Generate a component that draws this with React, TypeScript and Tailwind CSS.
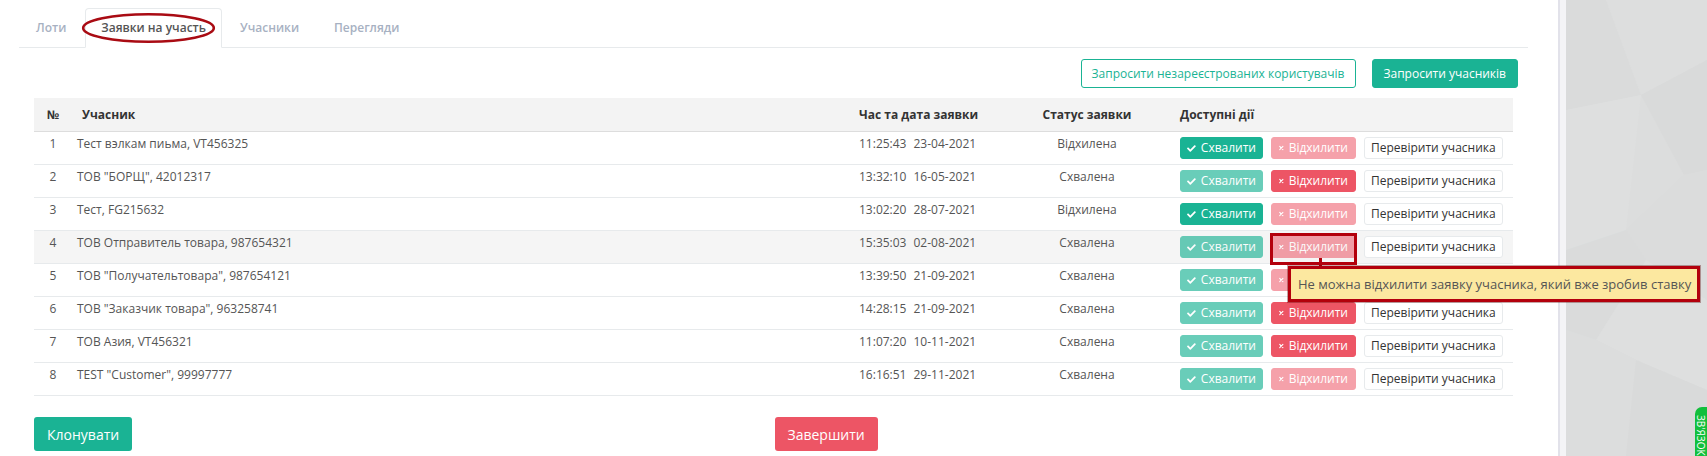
import React from "react";

type Row = {
  n: number;
  name: string;
  time: string;
  date: string;
  status: string;
  approve: boolean;
  reject: boolean;
  highlight?: boolean;
  hover?: boolean;
};

const rows: Row[] = [
  { n: 1, name: "Тест вэлкам пиьма, VT456325", time: "11:25:43", date: "23-04-2021", status: "Відхилена", approve: true, reject: false },
  { n: 2, name: 'ТОВ "БОРЩ", 42012317', time: "13:32:10", date: "16-05-2021", status: "Схвалена", approve: false, reject: true },
  { n: 3, name: "Тест, FG215632", time: "13:02:20", date: "28-07-2021", status: "Відхилена", approve: true, reject: false },
  { n: 4, name: "ТОВ Отправитель товара, 987654321", time: "15:35:03", date: "02-08-2021", status: "Схвалена", approve: false, reject: false, highlight: true, hover: true },
  { n: 5, name: 'ТОВ "Получательтовара", 987654121', time: "13:39:50", date: "21-09-2021", status: "Схвалена", approve: false, reject: false },
  { n: 6, name: 'ТОВ "Заказчик товара", 963258741', time: "14:28:15", date: "21-09-2021", status: "Схвалена", approve: false, reject: true },
  { n: 7, name: "ТОВ Азия, VT456321", time: "11:07:20", date: "10-11-2021", status: "Схвалена", approve: false, reject: true },
  { n: 8, name: 'TEST "Customer", 99997777', time: "16:16:51", date: "29-11-2021", status: "Схвалена", approve: false, reject: false },
];

const CheckIcon = () => (
  <svg viewBox="0 0 512 512" className="h-[9px] w-[10px] fill-white">
    <path d="M173.9 439.4L7.5 273c-10-10-10-26.2 0-36.2l36.2-36.2c10-10 26.2-10 36.2 0L192 312.7 432.1 72.6c10-10 26.2-10 36.2 0l36.2 36.2c10 10 10 26.2 0 36.2L210.1 439.4c-10 10-26.2 10-36.2 0z" />
  </svg>
);

const TimesIcon = () => (
  <svg viewBox="0 0 10 10" className="h-[8px] w-[8px]">
    <path d="M1.6 1.6 L8.4 8.4 M8.4 1.6 L1.6 8.4" stroke="white" strokeWidth="2.4" strokeLinecap="round" />
  </svg>
);

function ApproveBtn({ active }: { active: boolean }) {
  return (
    <span
      className={
        "inline-flex h-[22px] w-[83px] items-center gap-[5px] rounded-[3px] border border-[#1ab394] bg-[#1ab394] px-[6px] text-[12px] leading-[18px] text-white " +
        (active ? "" : "opacity-65")
      }
    >
      <CheckIcon />
      Схвалити
    </span>
  );
}

function RejectBtn({ active, highlight }: { active: boolean; highlight?: boolean }) {
  return (
    <span className="relative inline-flex">
      <span
        className={
          "inline-flex h-[22px] w-[85px] items-center gap-[5px] rounded-[3px] border border-[#ed5565] bg-[#ed5565] px-[7px] text-[12px] leading-[18px] text-white " +
          (active ? "" : "opacity-55")
        }
      >
        <TimesIcon />
        Відхилити
      </span>
      {highlight && (
        <>
          <span className="absolute -left-[1px] -right-[1px] -top-[3px] -bottom-[2px] border-[3px] border-[#b3000c]" />
          <span className="absolute left-[48px] top-[22px] h-[8px] w-[3px] bg-[#b3000c]" />
          <span className="absolute left-[17px] top-[30px] z-20 flex h-[36px] w-[412px] items-center whitespace-nowrap border-[3px] border-[#b3000c] bg-[#fce8a0] pl-[7px] text-[13px] text-[#555] shadow-[0_0_0_1px_rgba(90,0,0,0.35)]">
            Не можна відхилити заявку учасника, який вже зробив ставку
          </span>
        </>
      )}
    </span>
  );
}

const gridCols = "grid grid-cols-[38px_779px_171px_130px_361px]";

export default function App() {
  return (
    <div className="flex h-[456px] w-[1707px] overflow-hidden bg-white font-['Open_Sans',sans-serif] text-[#555]">
      <main className="relative w-[1558px] shrink-0 pl-[19px] pr-[30px] pt-[8px]">
        {/* Tabs */}
        <div className="relative flex border-b border-[#e7eaec]">
          <span className="-mb-px mr-[2px] border border-transparent px-[16px] py-[10px] text-[12px] font-semibold leading-[18px] text-[#a7b1c2]">
            Лоти
          </span>
          <span className="-mb-px mr-[2px] rounded-t-[4px] border border-[#e7eaec] border-b-white bg-white px-[15px] py-[10px] text-[12px] font-semibold leading-[18px] text-[#555]">
            Заявки на участь
          </span>
          <span className="-mb-px mr-[2px] border border-transparent px-[15px] py-[10px] text-[12px] font-semibold leading-[18px] text-[#a7b1c2]">
            Учасники
          </span>
          <span className="-mb-px mr-[2px] border border-transparent px-[16px] py-[10px] text-[12px] font-semibold leading-[18px] text-[#a7b1c2]">
            Перегляди
          </span>
          <svg className="pointer-events-none absolute left-[61px] top-[3px]" width="137" height="34" viewBox="0 0 137 34">
            <ellipse cx="68.5" cy="17" rx="65.3" ry="13.7" fill="none" stroke="#a90b13" strokeWidth="2.6" />
          </svg>
        </div>

        <div className="px-[15px]">
          {/* Top action buttons */}
          <div className="-mr-[5px] mt-[11px] flex justify-end gap-[16px]">
            <span className="flex h-[29px] items-center rounded-[3px] border border-[#1ab394] bg-white px-[10px] text-[12px] text-[#1ab394]">
              Запросити незареєстрованих користувачів
            </span>
            <span className="flex h-[29px] items-center rounded-[3px] border border-[#1ab394] bg-[#1ab394] px-[11px] text-[12px] text-white">
              Запросити учасників
            </span>
          </div>

          {/* Table */}
          <div className="mt-[10px] w-[1479px]">
            <div className={gridCols + " h-[34px] items-center border-b border-[#dddddd] bg-[#f3f3f3] text-[12px] font-bold text-[#333]"}>
              <div className="text-center">№</div>
              <div className="pl-[10px]">Учасник</div>
              <div className="pl-[8px]">Час та дата заявки</div>
              <div className="text-center">Статус заявки</div>
              <div className="pl-[28px]">Доступні дії</div>
            </div>
            {rows.map((r) => (
              <div
                key={r.n}
                className={gridCols + " h-[33px] border-b border-[#e7eaec] text-[12px] leading-[18px] " + (r.hover ? "bg-[#f5f5f5]" : "")}
              >
                <div className="pt-[3px] text-center">{r.n}</div>
                <div className="pl-[5px] pt-[3px]">{r.name}</div>
                <div className="whitespace-pre pl-[8px] pt-[3px]">
                  {r.time}
                  <span className="ml-[7px]">{r.date}</span>
                </div>
                <div className="pt-[3px] text-center">{r.status}</div>
                <div className="flex gap-[8px] pl-[28px] pt-[5px]">
                  <ApproveBtn active={r.approve} />
                  <RejectBtn active={r.reject} highlight={r.highlight} />
                  <span className="inline-flex h-[22px] items-center rounded-[3px] border border-[#e7eaec] bg-white px-[6px] text-[12px] leading-[18px] text-[#333]">
                    Перевірити учасника
                  </span>
                </div>
              </div>
            ))}
          </div>

          {/* Bottom buttons */}
          <div className="mt-[21px] grid w-[1479px] grid-cols-2">
            <div>
              <span className="inline-flex h-[34px] items-center rounded-[3px] bg-[#1ab394] px-[13px] text-[14px] text-white">
                Клонувати
              </span>
            </div>
            <div className="pl-[1px]">
              <span className="inline-flex h-[34px] items-center rounded-[3px] bg-[#ed5565] px-[13px] text-[14px] text-white">
                Завершити
              </span>
            </div>
          </div>
        </div>
      </main>

      <div className="w-[2px] shrink-0 bg-[#e2e2ea]" />
      <div className="w-[6px] shrink-0 bg-[#f4f4f6]" />

      <aside className="relative flex-1 overflow-hidden bg-[#dcdddd]">
        <svg className="absolute inset-0" width="141" height="456" viewBox="0 0 141 456">
          <polygon points="0,0 40,0 75,95 0,110" fill="#dadbdb" />
          <polygon points="40,0 141,0 141,60 75,95" fill="#dddede" />
          <polygon points="0,110 75,95 60,230 0,250" fill="#dedfdf" />
          <polygon points="75,95 141,60 141,170 118,175" fill="#d9dada" />
          <polygon points="60,230 118,175 141,170 141,300 80,260" fill="#dbdcdc" />
          <polygon points="0,250 60,230 80,260 30,340 0,330" fill="#dadbdb" />
          <polygon points="30,340 80,260 141,300 141,390 70,360" fill="#dedfdf" />
          <polygon points="0,330 30,340 70,360 60,456 0,456" fill="#dcdddd" />
          <polygon points="70,360 141,390 141,456 60,456" fill="#d9dada" />
        </svg>
        <div className="absolute bottom-0 right-0 h-[49px] w-[12px] overflow-hidden rounded-tl-[7px] bg-[#12bf3c]">
          <span className="absolute left-[2px] top-[8px] origin-top-left translate-x-[9px] rotate-90 whitespace-nowrap text-[10px] leading-[10px] text-white">
            ЗВ'ЯЗОК
          </span>
        </div>
      </aside>
    </div>
  );
}
